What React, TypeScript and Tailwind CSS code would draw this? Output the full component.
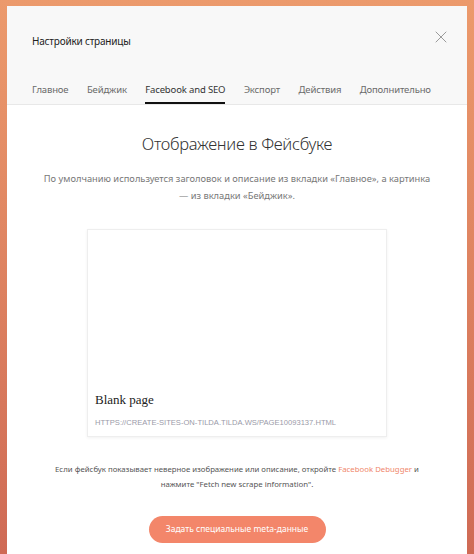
import { X } from "lucide-react";

const tabs = ["Главное", "Бейджик", "Facebook and SEO", "Экспорт", "Действия", "Дополнительно"];

export default function App() {
  return (
    <div
      className="h-[554px] w-[474px] overflow-hidden bg-gradient-to-b from-[#ec9a6c] to-[#cf6a55] px-[7px] pt-[6px]"
      style={{ fontFamily: '"Noto Sans", "Open Sans", sans-serif' }}
    >
      <div className="h-full bg-white">
        {/* header */}
        <div className="relative border-b border-[#e8e8e8] bg-[#f8f8f8] px-[25px]">
          <h2 className="pt-[28px] text-[10px] leading-[14px] tracking-[-0.2px] text-[#222]">Настройки страницы</h2>
          <button className="absolute right-[16px] top-[21px] text-[#9a9a9a]">
            <X className="h-[20px] w-[20px]" strokeWidth={1.2} />
          </button>
          <div className="mt-[34.5px] flex gap-[18.5px] whitespace-nowrap text-[9.5px] tracking-[-0.15px] text-[#6a6a6a]">
            {tabs.map((t) => (
              <div
                key={t}
                className={`pb-[6px] leading-[13px] ${
                  t === "Facebook and SEO" ? "border-b-2 border-[#111] text-[#333]" : "border-b-2 border-transparent"
                }`}
              >
                {t}
              </div>
            ))}
          </div>
        </div>

        {/* content */}
        <div className="flex flex-col items-center px-[30px]">
          <h1 className="mt-[27px] text-[16.5px] font-light leading-[24px] tracking-[-0.3px] text-[#333]">
            Отображение в Фейсбуке
          </h1>
          <p className="mt-[14.5px] whitespace-nowrap text-center text-[9.3px] leading-[17px] text-[#777]">
            По умолчанию используется заголовок и описание из вкладки «Главное», а картинка
            <br />— из вкладки «Бейджик».
          </p>

          <div className="mt-[25px] flex h-[208px] w-[300px] flex-col justify-end border border-[#eeeeee] px-[7px] pb-[8px] shadow-[0_1px_3px_rgba(0,0,0,0.06)]">
            <div className="text-[13px] leading-[16px] text-[#222]" style={{ fontFamily: '"Liberation Serif", Georgia, serif' }}>
              Blank page
            </div>
            <div
              className="mt-[10px] text-[7.6px] uppercase leading-[10px] text-[#9a9aa8]"
              style={{ fontFamily: '"Liberation Sans", Arial, sans-serif' }}
            >
              https://create-sites-on-tilda.tilda.ws/page10093137.html
            </div>
          </div>

          <p className="mt-[24.5px] whitespace-nowrap text-center text-[7.8px] leading-[15px] text-[#555]">
            Если фейсбук показывает неверное изображение или описание, откройте{" "}
            <span className="text-[#f0876c]">Facebook Debugger</span> и
            <br />
            нажмите "Fetch new scrape information".
          </p>

          <button className="mt-[24.5px] h-[27px] w-[177px] rounded-full bg-[#f3866a] text-[8.5px] text-white">
            Задать специальные meta-данные
          </button>
        </div>
      </div>
    </div>
  );
}
